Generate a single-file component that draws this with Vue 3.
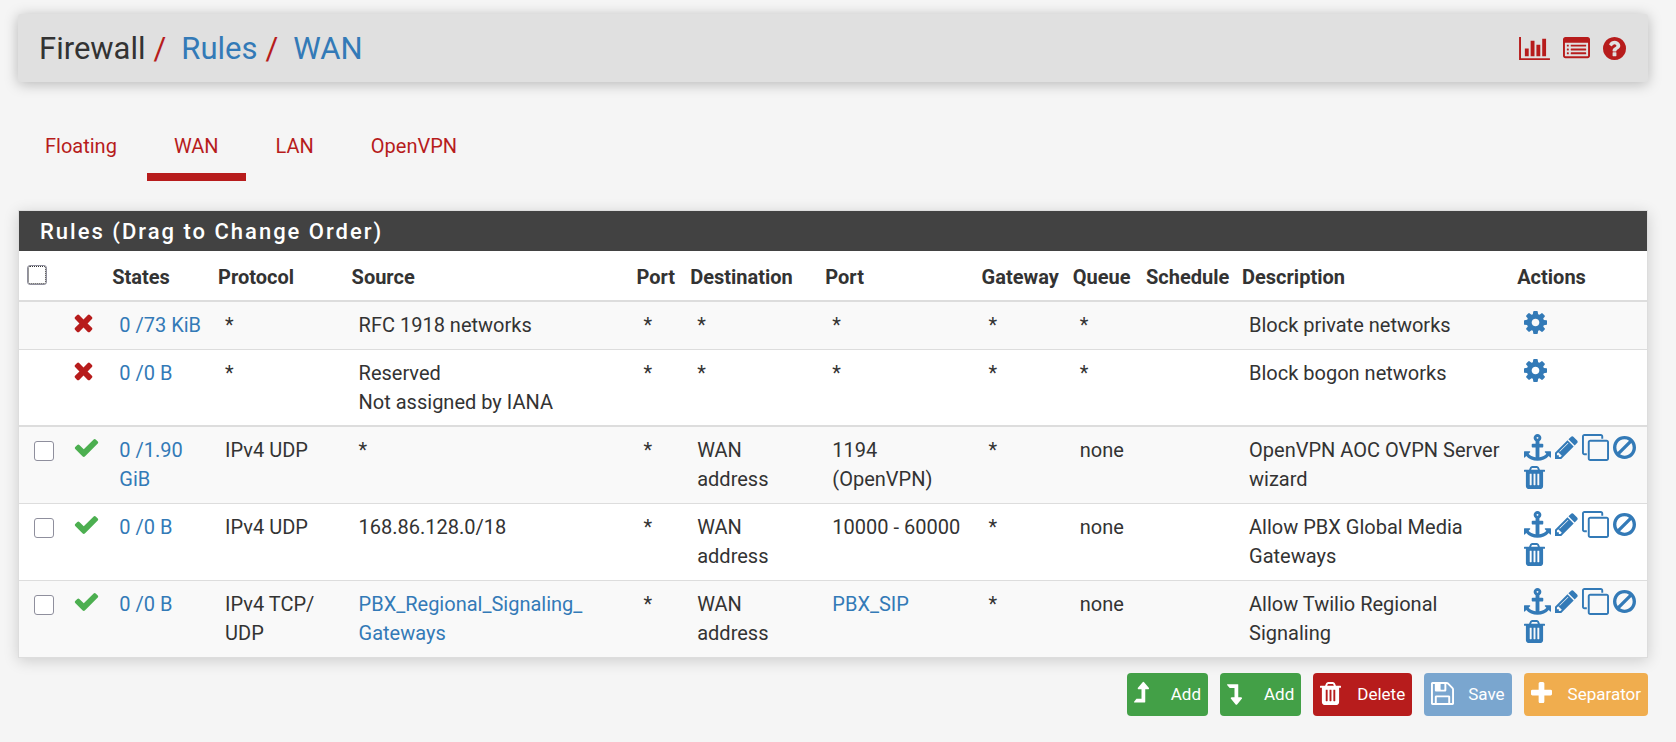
<script setup>
import { ref } from 'vue'

const icons = {
  chart: { box: '0 0 2048 1792', w: 31, d: 'M640 896v512h-256v-512h256zm384-512v1024h-256v-1024h256zm1024 1152v128h-2048v-1536h128v1408h1920zm-640-896v768h-256v-768h256zm384-384v1152h-256v-1152h256z' },
  list: { box: '0 0 1792 1792', w: 27, d: 'M384 1184v64q0 13-9.5 22.5t-22.5 9.5h-64q-13 0-22.5-9.5t-9.5-22.5v-64q0-13 9.5-22.5t22.5-9.5h64q13 0 22.5 9.5t9.5 22.5zm0-256v64q0 13-9.5 22.5t-22.5 9.5h-64q-13 0-22.5-9.5t-9.5-22.5v-64q0-13 9.5-22.5t22.5-9.5h64q13 0 22.5 9.5t9.5 22.5zm0-256v64q0 13-9.5 22.5t-22.5 9.5h-64q-13 0-22.5-9.5t-9.5-22.5v-64q0-13 9.5-22.5t22.5-9.5h64q13 0 22.5 9.5t9.5 22.5zm1152 512v64q0 13-9.5 22.5t-22.5 9.5h-960q-13 0-22.5-9.5t-9.5-22.5v-64q0-13 9.5-22.5t22.5-9.5h960q13 0 22.5 9.5t9.5 22.5zm0-256v64q0 13-9.5 22.5t-22.5 9.5h-960q-13 0-22.5-9.5t-9.5-22.5v-64q0-13 9.5-22.5t22.5-9.5h960q13 0 22.5 9.5t9.5 22.5zm0-256v64q0 13-9.5 22.5t-22.5 9.5h-960q-13 0-22.5-9.5t-9.5-22.5v-64q0-13 9.5-22.5t22.5-9.5h960q13 0 22.5 9.5t9.5 22.5zm128 704v-832q0-13-9.5-22.5t-22.5-9.5h-1472q-13 0-22.5 9.5t-9.5 22.5v832q0 13 9.5 22.5t22.5 9.5h1472q13 0 22.5-9.5t9.5-22.5zm128-1088v1088q0 66-47 113t-113 47h-1472q-66 0-113-47t-47-113v-1088q0-66 47-113t113-47h1472q66 0 113 47t47 113z' },
  help: { box: '128 0 1536 1792', w: 23, d: 'M1024 1376v-192q0-14-9-23t-23-9h-192q-14 0-23 9t-9 23v192q0 14 9 23t23 9h192q14 0 23-9t9-23zm256-672q0-88-55.5-163t-138.5-116-170-41q-243 0-371 213-15 24 8 42l132 100q7 6 19 6 16 0 25-12 53-68 86-92 34-24 86-24 48 0 85.5 26t37.5 59q0 38-20 61t-68 45q-63 28-115.5 86.5t-52.5 125.5v36q0 14 9 23t23 9h192q14 0 23-9t9-23q0-19 21.5-49.5t54.5-49.5q32-18 49-28.5t46-35 44.5-48 28-60.5 12.5-81zm384 192q0 209-103 385.5t-279.5 279.5-385.5 103-385.5-103-279.5-279.5-103-385.5 103-385.5 279.5-279.5 385.5-103 385.5 103 279.5 279.5 103 385.5z' },
  times: { box: '192 0 1408 1792', w: 21, d: 'M1490 1322q0 40-28 68l-136 136q-28 28-68 28t-68-28l-294-294-294 294q-28 28-68 28t-68-28l-136-136q-28-28-28-68t28-68l294-294-294-294q-28-28-28-68t28-68l136-136q28-28 68-28t68 28l294 294 294-294q28-28 68-28t68 28l136 136q28 28 28 68t-28 68l-294 294 294 294q28 28 28 68z' },
  check: { box: '0 0 1792 1792', w: 27, d: 'M1671 566q0 40-28 68l-724 724-136 136q-28 28-68 28t-68-28l-136-136-362-362q-28-28-28-68t28-68l136-136q28-28 68-28t68 28l294 295 656-657q28-28 68-28t68 28l136 136q28 28 28 68z' },
  cog: { box: '128 0 1536 1792', w: 23, d: 'M1152 896q0-106-75-181t-181-75-181 75-75 181 75 181 181 75 181-75 75-181zm512-109v222q0 12-8 23t-20 13l-185 28q-19 54-39 91 35 50 107 138 10 12 10 25t-9 23q-27 37-99 108t-94 71q-12 0-26-9l-138-108q-44 23-91 38-16 136-29 186-7 28-36 28h-222q-14 0-24.5-8.5t-11.5-21.5l-28-184q-49-16-90-37l-141 107q-10 9-25 9-14 0-25-11-126-114-165-168-7-10-7-23 0-12 8-23 15-21 51-66.5t54-70.5q-27-50-41-99l-183-27q-13-2-21-12.5t-8-23.5v-222q0-12 8-23t19-13l186-28q14-46 39-92-40-57-107-138-10-12-10-24 0-10 9-23 26-36 98.5-107.5t94.5-71.5q13 0 26 10l138 107q44-23 91-38 16-136 29-186 7-28 36-28h222q14 0 24.5 8.5t11.5 21.5l28 184q49 16 90 37l142-107q9-9 24-9 13 0 25 10 129 119 165 170 7 8 7 22 0 12-8 23-15 21-51 66.5t-54 70.5q26 50 41 98l183 28q13 2 21 12.5t8 23.5z' },
  anchor: { box: '0 0 1792 1792', w: 27, d: 'M960 256q0-26-19-45t-45-19-45 19-19 45 19 45 45 19 45-19 19-45zm832 928v352q0 22-20 30-8 2-12 2-12 0-23-9l-93-93q-119 143-318.5 226.5t-429.5 83.5-429.5-83.5-318.5-226.5l-93 93q-9 9-23 9-4 0-12-2-20-8-20-30v-352q0-14 9-23t23-9h352q22 0 30 20 8 19-7 35l-100 100q67 91 189.5 153.5t271.5 82.5v-647h-192q-26 0-45-19t-19-45v-128q0-26 19-45t45-19h192v-163q-58-34-93-92.5t-35-128.5q0-106 75-181t181-75 181 75 75 181q0 70-35 128.5t-93 92.5v163h192q26 0 45 19t19 45v128q0 26-19 45t-45 19h-192v647q149-20 271.5-82.5t189.5-153.5l-100-100q-15-16-7-35 8-20 30-20h352q14 0 23 9t9 23z' },
  pencil: { box: '128 0 1536 1792', w: 23, d: 'M491 1536l91-91-235-235-91 91v107h128v128h107zm523-928q0-22-22-22-10 0-17 7l-542 542q-7 7-7 17 0 22 22 22 10 0 17-7l542-542q7-7 7-17zm-54-192l416 416-832 832h-416v-416zm683 96q0 53-37 90l-166 166-416-416 166-165q36-38 90-38 53 0 91 38l235 234q37 39 37 91z' },
  clone: { box: '0 0 1792 1792', w: 27, d: 'M1664 1632v-1088q0-13-9.5-22.5t-22.5-9.5h-1088q-13 0-22.5 9.5t-9.5 22.5v1088q0 13 9.5 22.5t22.5 9.5h1088q13 0 22.5-9.5t9.5-22.5zm128-1088v1088q0 66-47 113t-113 47h-1088q-66 0-113-47t-47-113v-1088q0-66 47-113t113-47h1088q66 0 113 47t47 113zm-384-384v160h-128v-160q0-13-9.5-22.5t-22.5-9.5h-1088q-13 0-22.5 9.5t-9.5 22.5v1088q0 13 9.5 22.5t22.5 9.5h160v128h-160q-66 0-113-47t-47-113v-1088q0-66 47-113t113-47h1088q66 0 113 47t47 113z' },
  ban: { box: '128 0 1536 1792', w: 23, d: 'M1440 893q0-161-87-295l-754 753q137 89 297 89 111 0 211.5-43.5t173.5-116.5 116-174.5 43-212.5zm-999 299l755-754q-135-91-300-91-148 0-273 73t-198 199-73 274q0 162 89 299zm1223-299q0 157-61 300t-163.5 246-245 164-298.5 61-298.5-61-245-164-163.5-246-61-300 61-299.5 163.5-245.5 245-164 298.5-61 298.5 61 245 164 163.5 245.5 61 299.5z' },
  trash: { box: '192 0 1408 1792', w: 21, d: 'M704 1376v-704q0-14-9-23t-23-9h-64q-14 0-23 9t-9 23v704q0 14 9 23t23 9h64q14 0 23-9t9-23zm256 0v-704q0-14-9-23t-23-9h-64q-14 0-23 9t-9 23v704q0 14 9 23t23 9h64q14 0 23-9t9-23zm256 0v-704q0-14-9-23t-23-9h-64q-14 0-23 9t-9 23v704q0 14 9 23t23 9h64q14 0 23-9t9-23zm-544-992h448l-48-117q-7-9-17-11h-317q-10 2-17 11zm928 32v64q0 14-9 23t-23 9h-96v948q0 83-47 143.5t-113 60.5h-832q-66 0-113-58.5t-47-141.5v-952h-96q-14 0-23-9t-9-23v-64q0-14 9-23t23-9h309l70-167q15-37 54-63t79-26h320q40 0 79 26t54 63l70 167h309q14 0 23 9t9 23z' },
  up: { box: '272 0 1024 1792', w: 15, d: 'M1291 573q-18 35-59 35h-192v864q0 14-9 23t-23 9h-704q-21 0-29-18-8-20 4-35l160-192q9-11 25-11h320v-640h-192q-40 0-59-35-17-36 9-68l320-384q18-22 49-22t49 22l320 384q27 32 10 68z' },
  down: { box: '272 0 1024 1792', w: 15, d: 'M304 256h704q14 0 23 9t9 23v864h192q40 0 58 37t-9 69l-320 384q-18 22-49 22t-49-22l-320-384q-26-31-9-69 18-37 58-37h192v-640h-320q-14 0-25-11l-160-192q-13-14-4-34 9-19 29-19z' },
  save: { box: '128 0 1536 1792', w: 23, d: 'M512 1536h768v-384h-768v384zm896 0h128v-896q0-14-10-38.5t-20-34.5l-281-281q-10-10-34-20t-39-10v416q0 40-28 68t-68 28h-576q-40 0-68-28t-28-68v-416h-128v1280h128v-416q0-40 28-68t68-28h832q40 0 68 28t28 68v416zm-384-928v-320q0-13-9.5-22.5t-22.5-9.5h-192q-13 0-22.5 9.5t-9.5 22.5v320q0 13 9.5 22.5t22.5 9.5h192q13 0 22.5-9.5t9.5-22.5zm640 32v928q0 40-28 68t-68 28h-1344q-40 0-68-28t-28-68v-1344q0-40 28-68t68-28h928q40 0 88 20t76 48l280 280q28 28 48 76t20 88z' },
  plus: { box: '192 0 1408 1792', w: 21, d: 'M1600 736v192q0 40-28 68t-68 28h-416v416q0 40-28 68t-68 28h-192q-40 0-68-28t-28-68v-416h-416q-40 0-68-28t-28-68v-192q0-40 28-68t68-28h416v-416q0-40 28-68t68-28h192q40 0 68 28t28 68v416h416q40 0 68 28t28 68z' }
}

const headerLinks = [
  { icon: 'chart', label: 'Status' },
  { icon: 'list', label: 'Logs' },
  { icon: 'help', label: 'Help' }
]
const tabs = ['Floating', 'WAN', 'LAN', 'OpenVPN']
const activeTab = ref('WAN')

const headings = ['States', 'Protocol', 'Source', 'Port', 'Destination', 'Port', 'Gateway', 'Queue', 'Schedule', 'Description', 'Actions']

const rules = ref([
  { system: true, states: '0 /73 KiB', protocol: ['*'], source: ['RFC 1918 networks'], destination: '*', port: '*', queue: '*', description: 'Block private networks' },
  { system: true, states: '0 /0 B', protocol: ['*'], source: ['Reserved', 'Not assigned by IANA'], destination: '*', port: '*', queue: '*', description: 'Block bogon networks' },
  { selected: false, states: '0 /1.90 GiB', protocol: ['IPv4 UDP'], source: ['*'], destination: 'WAN address', port: '1194 (OpenVPN)', queue: 'none', description: 'OpenVPN AOC OVPN Server wizard' },
  { selected: false, states: '0 /0 B', protocol: ['IPv4 UDP'], source: ['168.86.128.0/18'], destination: 'WAN address', port: '10000 - 60000', queue: 'none', description: 'Allow PBX Global Media Gateways' },
  { selected: false, states: '0 /0 B', protocol: ['IPv4 TCP/', 'UDP'], source: ['PBX_Regional_Signaling_', 'Gateways'], alias: true, destination: 'WAN address', port: 'PBX_SIP', queue: 'none', description: 'Allow Twilio Regional Signaling' }
])
const allSelected = ref(false)
function toggleAll() {
  rules.value.forEach(r => { if (!r.system) r.selected = allSelected.value })
}

const ruleActions = [
  { icon: 'anchor', label: 'Move checked rules above' },
  { icon: 'pencil', label: 'Edit' },
  { icon: 'clone', label: 'Copy' },
  { icon: 'ban', label: 'Disable' },
  { icon: 'trash', label: 'Delete rule' }
]
const systemActions = [{ icon: 'cog', label: 'Settings' }]

const buttons = [
  { icon: 'up', label: 'Add', tone: 'green' },
  { icon: 'down', label: 'Add', tone: 'green' },
  { icon: 'trash', label: 'Delete', tone: 'red' },
  { icon: 'save', label: 'Save', tone: 'blue' },
  { icon: 'plus', label: 'Separator', tone: 'amber' }
]
</script>

<template>
  <div class="page">
    <header class="page-header">
      <nav class="crumbs" aria-label="Breadcrumb">
        <span>Firewall</span>
        <span class="slash">/</span>
        <a href="#rules">Rules</a>
        <span class="slash">/</span>
        <a href="#wan">WAN</a>
      </nav>
      <div class="header-links">
        <a v-for="l in headerLinks" :key="l.icon" href="#" :aria-label="l.label">
          <svg class="icon" :viewBox="icons[l.icon].box" :width="icons[l.icon].w" height="27" aria-hidden="true"><path :d="icons[l.icon].d" /></svg>
        </a>
      </div>
    </header>

    <nav class="tabs" aria-label="Interfaces">
      <a v-for="t in tabs" :key="t" href="#" class="tab" :class="{ active: t === activeTab }" @click.prevent="activeTab = t">{{ t }}</a>
    </nav>

    <section class="panel">
      <h2 class="panel-title">Rules (Drag to Change Order)</h2>
      <table class="rules">
        <colgroup>
          <col class="c-check"><col class="c-status"><col class="c-states"><col class="c-protocol"><col class="c-source">
          <col class="c-sport"><col class="c-dest"><col class="c-dport"><col class="c-gateway"><col class="c-queue">
          <col class="c-schedule"><col class="c-desc"><col class="c-actions">
        </colgroup>
        <thead>
          <tr>
            <th class="check-head"><input v-model="allSelected" class="box focused" type="checkbox" aria-label="Select all rules" @change="toggleAll"></th>
            <th></th>
            <th v-for="(h, i) in headings" :key="i">{{ h }}</th>
          </tr>
        </thead>
        <tbody>
          <tr v-for="(r, i) in rules" :key="i" :class="{ divider: i === 1 }">
            <td class="check-cell"><input v-if="!r.system" v-model="r.selected" class="box" type="checkbox" :aria-label="'Select ' + r.description"></td>
            <td class="icon-cell status-cell">
              <svg v-if="r.system" class="icon blocked" :viewBox="icons.times.box" :width="icons.times.w" height="27" role="img" aria-label="Block"><path :d="icons.times.d" /></svg>
              <svg v-else class="icon passed" :viewBox="icons.check.box" :width="icons.check.w" height="27" role="img" aria-label="Pass"><path :d="icons.check.d" /></svg>
            </td>
            <td><a href="#">{{ r.states }}</a></td>
            <td><template v-for="(p, k) in r.protocol" :key="k">{{ p }}<wbr></template></td>
            <td>
              <a v-if="r.alias" href="#"><template v-for="(s, k) in r.source" :key="k">{{ s }}<wbr></template></a>
              <template v-else><div v-for="s in r.source" :key="s">{{ s }}</div></template>
            </td>
            <td>*</td>
            <td>{{ r.destination }}</td>
            <td><a v-if="r.alias" href="#">{{ r.port }}</a><template v-else>{{ r.port }}</template></td>
            <td>*</td>
            <td>{{ r.queue }}</td>
            <td></td>
            <td>{{ r.description }}</td>
            <td class="icon-cell">
              <div class="actions">
                <a v-for="a in (r.system ? systemActions : ruleActions)" :key="a.icon" href="#" :aria-label="a.label">
                  <svg class="icon" :viewBox="icons[a.icon].box" :width="icons[a.icon].w" height="27" aria-hidden="true"><path :d="icons[a.icon].d" /></svg>
                </a>
              </div>
            </td>
          </tr>
        </tbody>
      </table>
    </section>

    <div class="toolbar">
      <button v-for="(b, i) in buttons" :key="i" type="button" class="btn" :class="b.tone">
        <span class="btn-icon"><svg class="icon" :viewBox="icons[b.icon].box" :width="icons[b.icon].w" height="27" aria-hidden="true"><path :d="icons[b.icon].d" /></svg></span>{{ b.label }}
      </button>
    </div>
  </div>
</template>

<style>
body {
  background: #f5f5f5;
}
</style>

<style scoped>
.page {
  box-sizing: border-box;
  padding: 14px 28px 24px 18px;
  font-family: Roboto, "Liberation Sans", sans-serif;
  font-size: 20px;
  line-height: 29px;
  color: #333;
}
a {
  color: #337ab7;
  text-decoration: none;
}
.icon {
  display: block;
  fill: currentColor;
}
.page-header {
  display: flex;
  align-items: center;
  justify-content: space-between;
  height: 68px;
  padding: 0 22px 0 21px;
  background: #e0e0e0;
  border-radius: 3px;
  box-shadow: 0 2px 14px rgba(0, 0, 0, 0.26);
}
.crumbs {
  display: flex;
  padding-top: 2px;
  font-size: 31px;
  line-height: 40px;
  color: #333;
}
.slash {
  margin: 0 15px 0 8px;
  color: #b71c1c;
}
.header-links {
  display: flex;
  gap: 13px;
}
.header-links a {
  color: #b71c1c;
}
.tabs {
  display: flex;
  gap: 3px;
  margin-top: 36px;
}
.tab {
  padding: 14px 27px 12px;
  color: #b71c1c;
  border-bottom: 8px solid transparent;
}
.tab.active {
  border-bottom-color: #b71c1c;
}
.panel {
  margin-top: 29px;
  background: #fff;
  border: 1px solid #ddd;
  border-bottom: 0;
  box-shadow: 0 3px 14px rgba(0, 0, 0, 0.16);
}
.panel-title {
  margin: 0;
  padding: 6px 21px 5px;
  background: #424242;
  color: #fff;
  font-size: 22px;
  font-weight: 500;
  line-height: 29px;
  letter-spacing: 2px;
}
.rules {
  width: 100%;
  table-layout: fixed;
  border-collapse: separate;
  border-spacing: 0;
}
.c-check { width: 2.6%; }
.c-status { width: 2.7%; }
.c-states { width: 6.5%; }
.c-protocol { width: 8.2%; }
.c-source { width: 17.5%; }
.c-sport { width: 3.3%; }
.c-dest { width: 8.3%; }
.c-dport { width: 9.6%; }
.c-gateway { width: 5.6%; }
.c-queue { width: 4.5%; }
.c-schedule { width: 5.9%; }
.c-desc { width: 16.9%; }
.c-actions { width: 8.4%; }
th {
  padding: 12px 0 8px 7px;
  text-align: left;
  font-weight: 700;
  white-space: nowrap;
  border-bottom: 2px solid #ddd;
}
td {
  padding: 9px 7px 9px 14px;
  vertical-align: top;
  border-bottom: 1px solid #ddd;
}
tbody tr:nth-child(odd) {
  background: #f9f9f9;
}
.divider td {
  padding-bottom: 8px;
  border-bottom: 2px solid #ddd;
}
.icon-cell {
  padding-top: 7px;
  padding-right: 0;
}
.status-cell {
  padding-left: 12px;
}
.check-cell {
  padding: 14px 0 0 15px;
}
.check-head {
  padding: 14px 0 0 8px;
  vertical-align: top;
}
.box {
  display: block;
  box-sizing: border-box;
  appearance: none;
  width: 20px;
  height: 20px;
  margin: 0;
  background: #fff;
  border: 1px solid #8f8f9d;
  border-radius: 3px;
}
.box.focused {
  outline: 1px dotted #333;
  outline-offset: -2px;
}
.box:checked {
  background: #337ab7;
}
.blocked {
  color: #b71c1c;
}
.passed {
  color: #4caf50;
}
.actions {
  display: flex;
  flex-wrap: wrap;
  gap: 3px 4px;
}
.toolbar {
  display: flex;
  justify-content: flex-end;
  gap: 12px;
  margin-top: 15px;
}
.btn {
  display: flex;
  align-items: center;
  height: 43px;
  padding: 0 7px 2px;
  border: 0;
  border-radius: 4px;
  color: #fff;
  font-family: inherit;
  font-size: 17px;
  line-height: 24px;
}
.btn-icon {
  width: 37px;
}
.green { background: #43a047; }
.red { background: #b71c1c; }
.blue { background: #7aa6cf; }
.amber { background: #f0ad4e; }
</style>
